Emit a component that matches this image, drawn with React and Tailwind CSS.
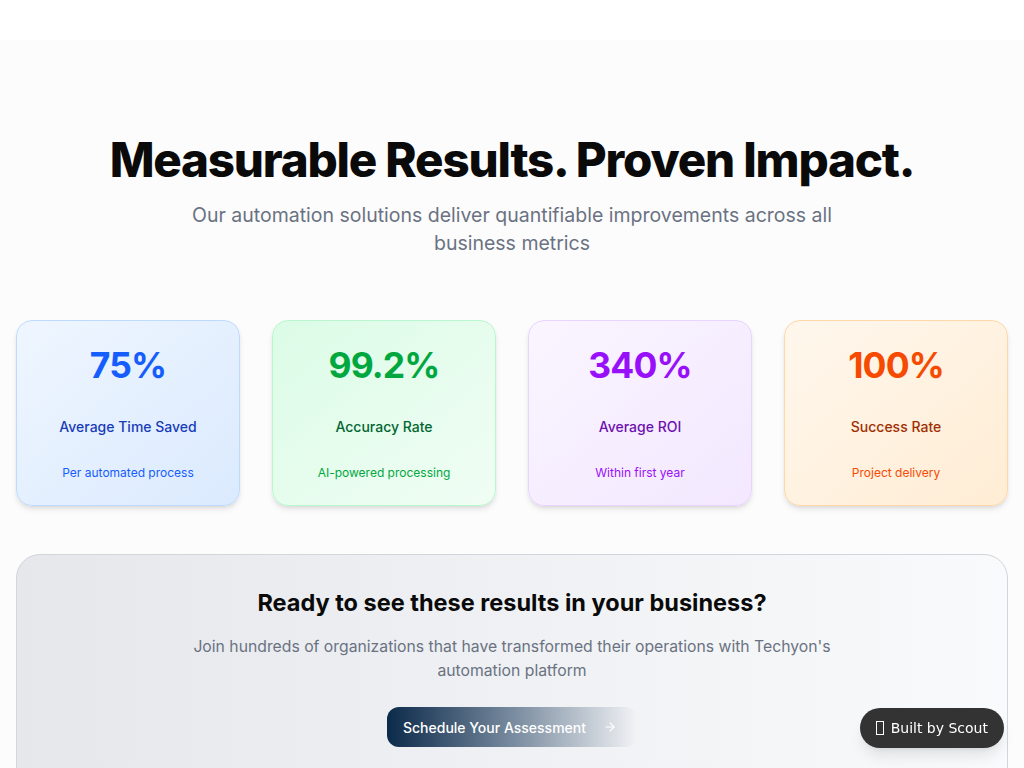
import React from "react";

const cards = [
  {
    value: "75%",
    label: "Average Time Saved",
    sub: "Per automated process",
    box: "bg-gradient-to-br from-blue-50 to-blue-100 border-blue-200",
    num: "text-blue-600",
    lab: "text-blue-800",
    subc: "text-blue-600",
  },
  {
    value: "99.2%",
    label: "Accuracy Rate",
    sub: "AI-powered processing",
    box: "bg-gradient-to-br from-green-100 to-green-50 border-green-200",
    num: "text-green-600",
    lab: "text-green-800",
    subc: "text-green-600",
  },
  {
    value: "340%",
    label: "Average ROI",
    sub: "Within first year",
    box: "bg-gradient-to-br from-purple-50 to-purple-100 border-purple-200",
    num: "text-purple-600",
    lab: "text-purple-800",
    subc: "text-purple-600",
  },
  {
    value: "100%",
    label: "Success Rate",
    sub: "Project delivery",
    box: "bg-gradient-to-br from-orange-50 to-orange-100 border-orange-200",
    num: "text-orange-600",
    lab: "text-orange-800",
    subc: "text-orange-600",
  },
];

export default function App() {
  return (
    <div className="min-h-screen bg-[#fcfcfc]" style={{ fontFamily: "Inter, 'Noto Sans', sans-serif" }}>
      <div className="h-10 bg-white" />
      <section className="pt-[92px] px-4">
        <h1 className="text-center text-[47.5px] leading-[56px] font-extrabold tracking-tight text-[#0a0a0a]">
          Measurable Results. Proven Impact.
        </h1>
        <p className="mx-auto mt-[13px] max-w-[672px] text-center text-[19.5px] leading-7 text-gray-500">
          Our automation solutions deliver quantifiable improvements across all business metrics
        </p>
        <div className="mt-[63px] grid grid-cols-4 gap-8">
          {cards.map((c) => (
            <div
              key={c.value}
              className={`flex h-[186px] flex-col items-center rounded-2xl border pt-[25px] shadow-md ${c.box}`}
            >
              <div className={`text-[35.5px] leading-10 font-bold tracking-tight ${c.num}`}>{c.value}</div>
              <div className={`mt-[31px] text-[14px] leading-5 font-medium ${c.lab}`}>{c.label}</div>
              <div className={`mt-[28px] text-[12px] leading-4 ${c.subc}`}>{c.sub}</div>
            </div>
          ))}
        </div>
        <div className="mt-12 rounded-3xl border border-gray-300 bg-gradient-to-r from-gray-200 to-gray-50 px-8 pt-[32px] pb-16 text-center">
          <h2 className="text-[23.5px] leading-8 font-bold text-[#0a0a0a]">Ready to see these results in your business?</h2>
          <p className="mx-auto mt-[16px] max-w-[672px] text-[15.75px] leading-6 text-gray-500">
            Join hundreds of organizations that have transformed their operations with Techyon's automation platform
          </p>
          <div className="mt-6 flex justify-center">
            <button className="flex h-10 items-center gap-[17px] rounded-xl bg-gradient-to-r from-[#0b2a4a] via-[#5a7189]/80 to-transparent pl-4 pr-5 text-[14px] font-medium text-white">
              Schedule Your Assessment
              <svg width="14" height="14" viewBox="0 0 24 24" fill="none" stroke="currentColor" strokeWidth="2" strokeLinecap="round" strokeLinejoin="round">
                <path d="M5 12h14" />
                <path d="m12 5 7 7-7 7" />
              </svg>
            </button>
          </div>
        </div>
      </section>
      <div
        className="fixed bottom-5 right-5 flex h-10 items-center gap-[7px] rounded-full bg-[#333333] px-4 text-[14px] text-white shadow-lg"
        style={{ fontFamily: "'DejaVu Sans', sans-serif" }}
      >
        <span className="inline-block h-[14px] w-[8px] border border-white" />
        <span>Built by Scout</span>
      </div>
    </div>
  );
}
